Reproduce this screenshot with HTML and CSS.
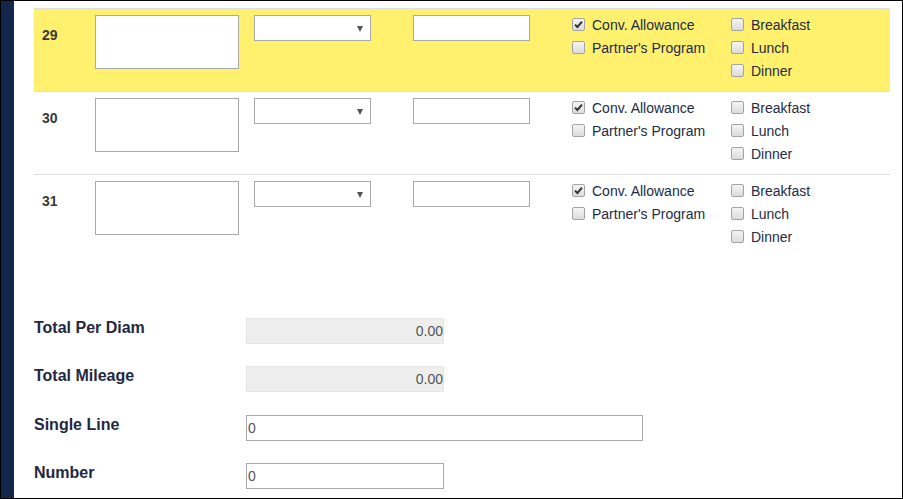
FILE: index.html
```html
<!DOCTYPE html>
<html>
<head>
<meta charset="utf-8">
<link rel="stylesheet" href="styles.css">
</head>
<body>
<div class="frame">
  <div class="sidebar"></div>
  <div class="content">
    <div class="table">
      <div class="row highlight">
        <div class="num">29</div>
        <div class="cell"><textarea class="ta"></textarea></div>
        <div class="cell"><span class="sel-wrap"><select class="sel"></select></span></div>
        <div class="cell"><input class="txt" type="text"></div>
        <div class="checks">
          <label class="chk"><span class="box checked"><svg viewBox="0 0 13 13" width="13" height="13"><path d="M3 6.6 L5.4 9 L10 3.6" fill="none" stroke="#333" stroke-width="2"/></svg></span>Conv. Allowance</label>
          <label class="chk"><span class="box"></span>Partner's Program</label>
        </div>
        <div class="checks">
          <label class="chk"><span class="box"></span>Breakfast</label>
          <label class="chk"><span class="box"></span>Lunch</label>
          <label class="chk"><span class="box"></span>Dinner</label>
        </div>
      </div>
      <div class="row">
        <div class="num">30</div>
        <div class="cell"><textarea class="ta"></textarea></div>
        <div class="cell"><span class="sel-wrap"><select class="sel"></select></span></div>
        <div class="cell"><input class="txt" type="text"></div>
        <div class="checks">
          <label class="chk"><span class="box checked"><svg viewBox="0 0 13 13" width="13" height="13"><path d="M3 6.6 L5.4 9 L10 3.6" fill="none" stroke="#333" stroke-width="2"/></svg></span>Conv. Allowance</label>
          <label class="chk"><span class="box"></span>Partner's Program</label>
        </div>
        <div class="checks">
          <label class="chk"><span class="box"></span>Breakfast</label>
          <label class="chk"><span class="box"></span>Lunch</label>
          <label class="chk"><span class="box"></span>Dinner</label>
        </div>
      </div>
      <div class="row last">
        <div class="num">31</div>
        <div class="cell"><textarea class="ta"></textarea></div>
        <div class="cell"><span class="sel-wrap"><select class="sel"></select></span></div>
        <div class="cell"><input class="txt" type="text"></div>
        <div class="checks">
          <label class="chk"><span class="box checked"><svg viewBox="0 0 13 13" width="13" height="13"><path d="M3 6.6 L5.4 9 L10 3.6" fill="none" stroke="#333" stroke-width="2"/></svg></span>Conv. Allowance</label>
          <label class="chk"><span class="box"></span>Partner's Program</label>
        </div>
        <div class="checks">
          <label class="chk"><span class="box"></span>Breakfast</label>
          <label class="chk"><span class="box"></span>Lunch</label>
          <label class="chk"><span class="box"></span>Dinner</label>
        </div>
      </div>
    </div>

    <div class="summary">
      <div class="frow">
        <div class="flabel">Total Per Diam</div>
        <input class="fin ro" type="text" value="0.00" readonly>
      </div>
      <div class="frow">
        <div class="flabel">Total Mileage</div>
        <input class="fin ro" type="text" value="0.00" readonly>
      </div>
      <div class="frow">
        <div class="flabel">Single Line</div>
        <input class="fin wide" type="text" value="0">
      </div>
      <div class="frow">
        <div class="flabel">Number</div>
        <input class="fin" type="text" value="0">
      </div>
    </div>
  </div>
</div>
</body>
</html>
```

FILE: styles.css
```css
html, body {
  margin: 0;
  padding: 0;
  background: #fff;
}

body {
  font-family: "Liberation Sans", Arial, sans-serif;
  color: #333;
}

.frame {
  width: 903px;
  height: 499px;
  box-sizing: border-box;
  border: 1px solid #000;
  display: flex;
  overflow: hidden;
  background: #fff;
}

.sidebar {
  width: 13px;
  flex: 0 0 13px;
  background: #14264b;
}

.content {
  flex: 1;
  padding: 7px 12px 0 20px;
}

.table {
  width: 856px;
  border-top: 1px solid #dedede;
}

.row {
  display: grid;
  grid-template-columns: 61px repeat(5, 159px);
  height: 82px;
  border-bottom: 1px solid #dedede;
}

.row.last {
  border-bottom: none;
}

.row.highlight {
  background: #fff06e;
}

.num {
  padding: 18px 0 0 8px;
  font-size: 14px;
  line-height: 16px;
  font-weight: bold;
  color: #3a3a3a;
}

.cell {
  padding-top: 6px;
}

.ta {
  display: block;
  width: 144px;
  height: 54px;
  box-sizing: border-box;
  border: 1px solid #a9a9a9;
  margin: 0;
  padding: 2px;
  resize: none;
  background: #fff;
  font-family: "Liberation Sans", Arial, sans-serif;
}

.sel-wrap {
  position: relative;
  display: block;
  width: 117px;
  height: 26px;
}

.sel-wrap::after {
  content: "";
  position: absolute;
  right: 8px;
  top: 11px;
  border-left: 3px solid transparent;
  border-right: 3px solid transparent;
  border-top: 6px solid #555;
  pointer-events: none;
}

.sel {
  display: block;
  width: 117px;
  height: 26px;
  box-sizing: border-box;
  border: 1px solid #a9a9a9;
  border-radius: 0;
  margin: 0;
  background: #fff;
  appearance: none;
  -webkit-appearance: none;
}

.txt {
  display: block;
  width: 117px;
  height: 26px;
  box-sizing: border-box;
  border: 1px solid #a9a9a9;
  margin: 0;
  padding: 0 2px;
  background: #fff;
}

.checks {
  padding-top: 4px;
  display: flex;
  flex-direction: column;
}

.chk {
  display: flex;
  align-items: center;
  height: 23px;
  font-size: 14px;
  color: #232c45;
  white-space: nowrap;
}

.box {
  width: 13px;
  height: 13px;
  box-sizing: border-box;
  border: 1px solid #a3a3a3;
  border-radius: 2px;
  background: linear-gradient(#f4f4f4, #dcdcdc);
  margin-right: 7px;
  flex: 0 0 13px;
  position: relative;
}

.box svg {
  position: absolute;
  left: -1px;
  top: -1px;
}

.summary {
  margin-top: 61px;
}

.frow {
  display: flex;
  align-items: flex-start;
  height: 48px;
}

.frow:nth-child(3) {
  margin-top: 1px;
}

.flabel {
  width: 212px;
  flex: 0 0 212px;
  font-size: 16px;
  line-height: 20px;
  font-weight: bold;
  color: #1f2842;
}

.fin {
  width: 198px;
  height: 26px;
  box-sizing: border-box;
  border: 1px solid #a9a9a9;
  margin: 0;
  padding: 0 1px;
  font-family: "Liberation Sans", Arial, sans-serif;
  font-size: 14px;
  color: #555;
  background: #fff;
}

.fin.wide {
  width: 397px;
}

.fin.ro {
  background: #eee;
  border-color: #e4e4e4;
  text-align: right;
  padding-right: 0;
}
```
